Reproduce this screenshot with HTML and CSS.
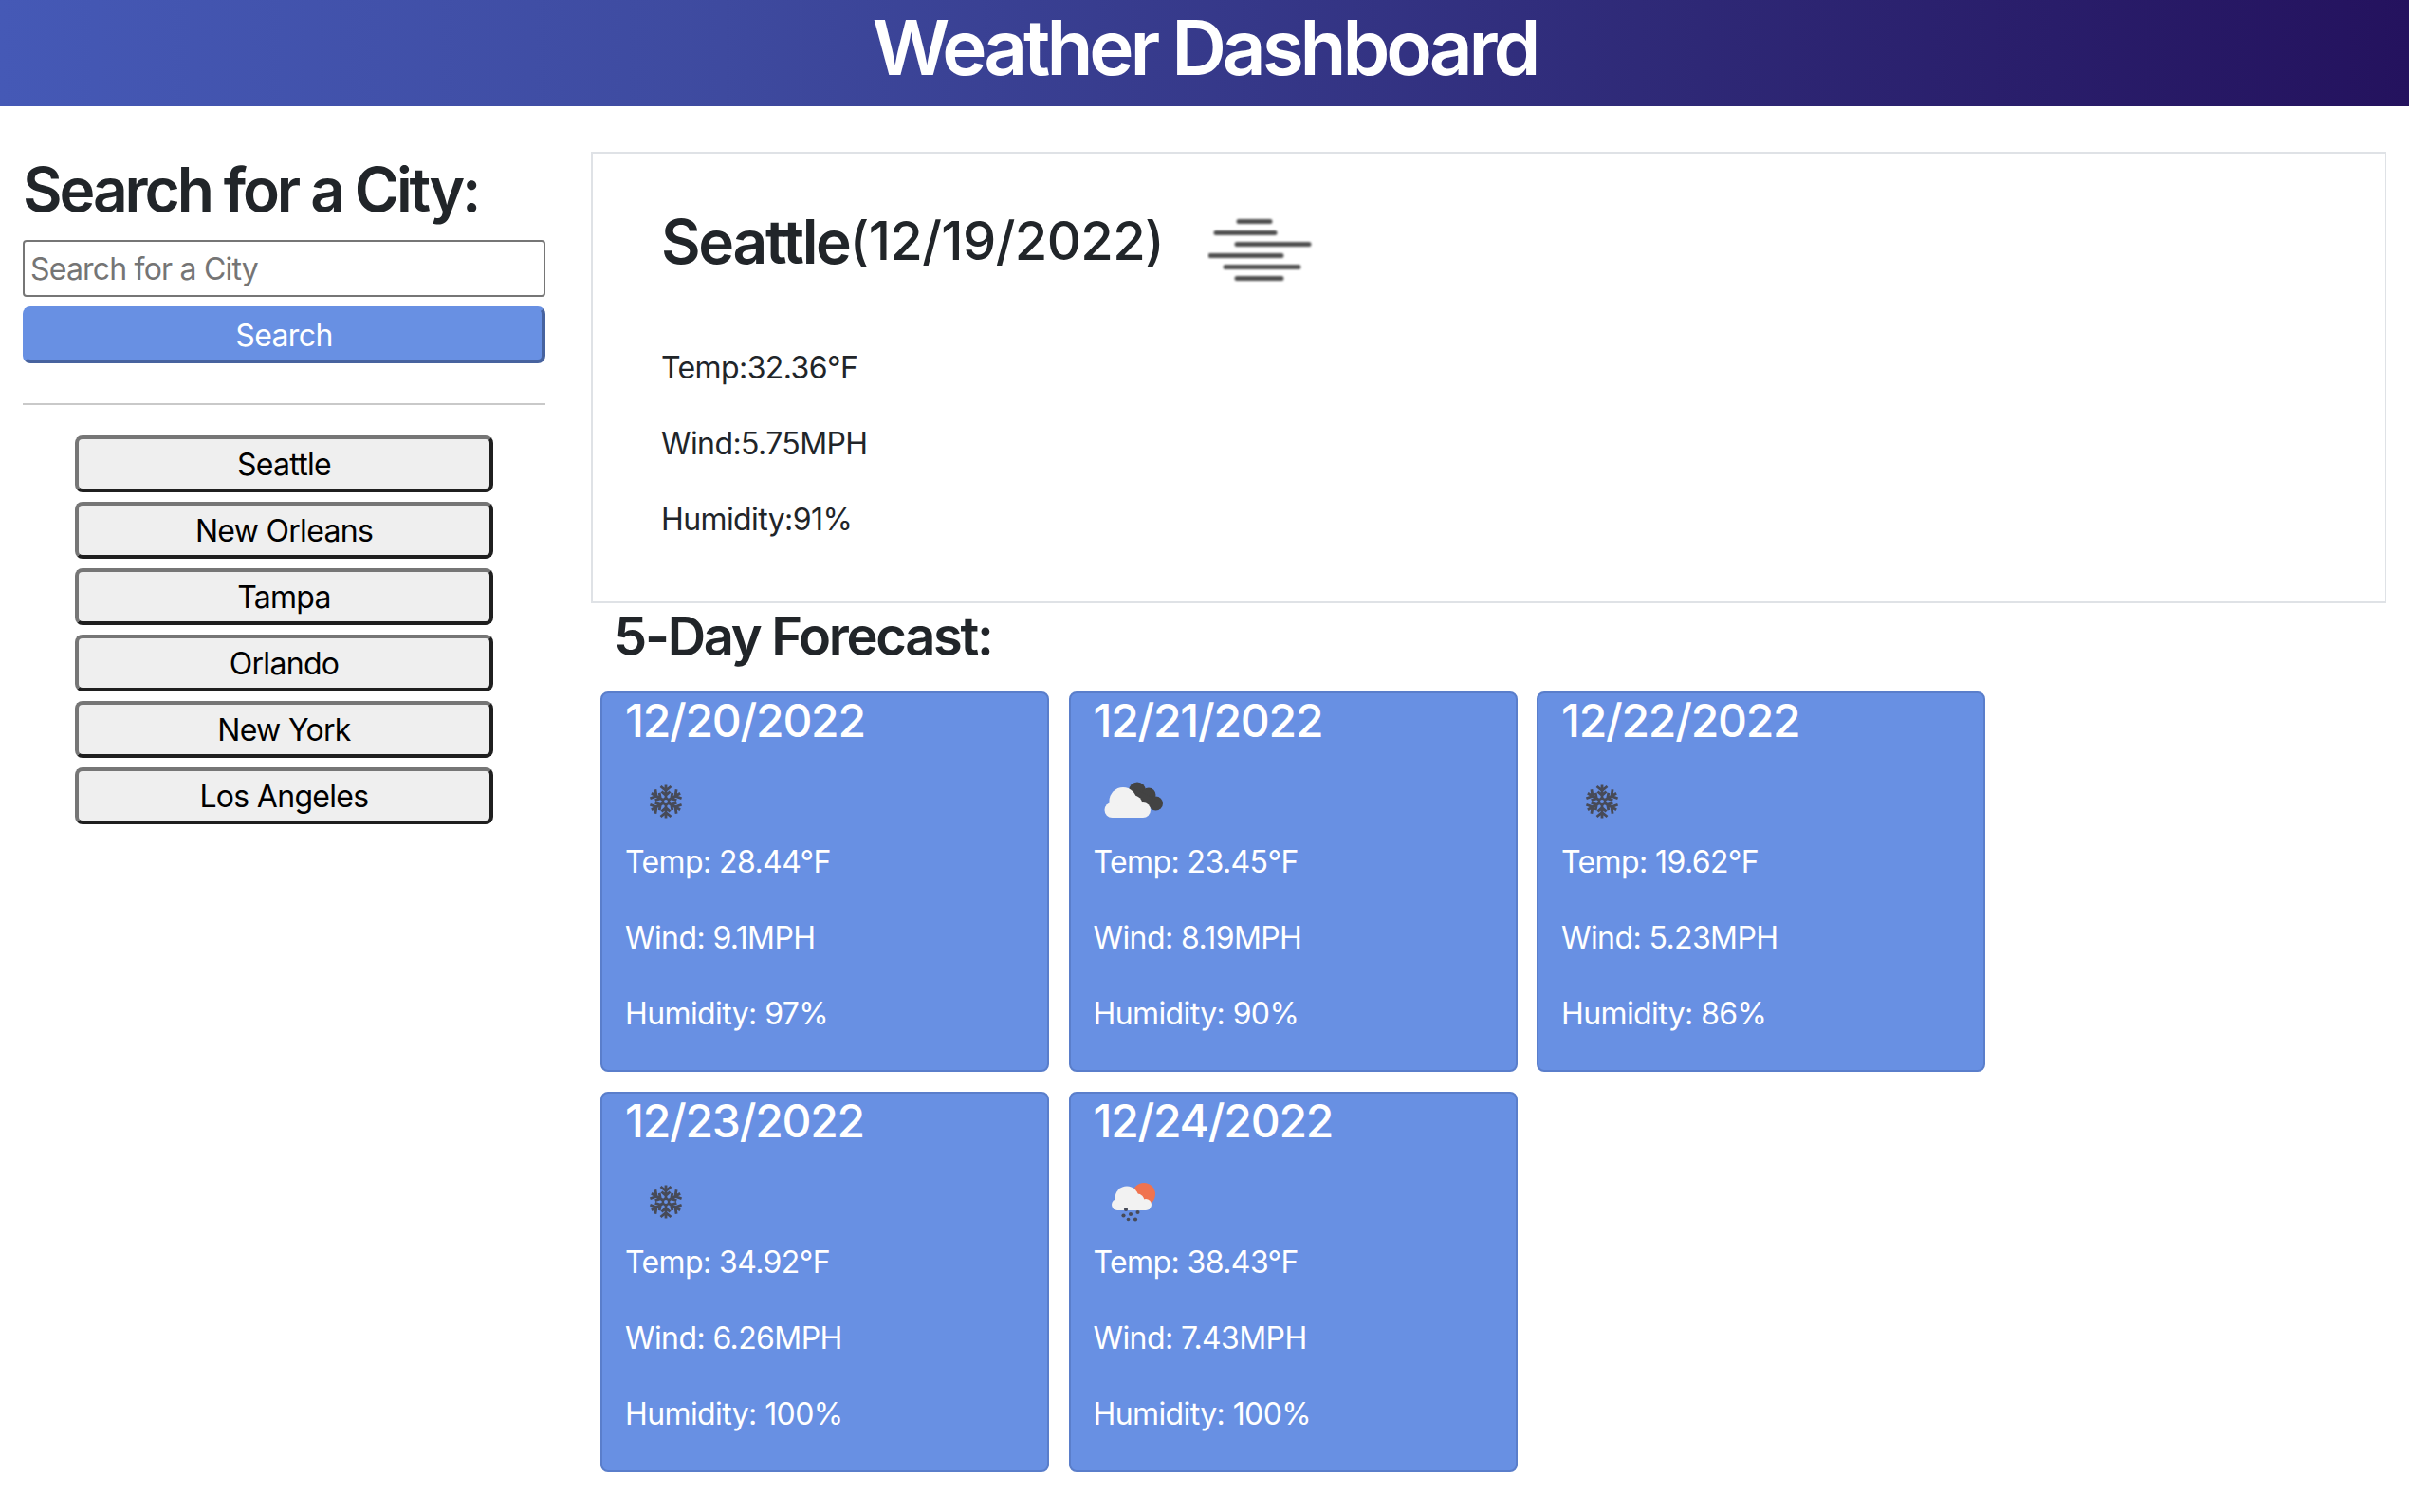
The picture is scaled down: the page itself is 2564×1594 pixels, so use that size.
FILE: index.html
```html
<!DOCTYPE html>
<html lang="en">
<head>
<meta charset="utf-8">
<title>Weather Dashboard</title>
<link rel="stylesheet" href="styles.css">
</head>
<body>
<svg class="defs" width="0" height="0" aria-hidden="true">
  <defs>
    <g id="arm">
      <path d="M0 -3.5V-17.500M-5.500 -16L0 -11.500L5.500 -16M-4.500 -10.500L0 -6.500L4.500 -10.500"/>
    </g>
    <symbol id="flake" viewBox="0 0 86 80">
      <g transform="translate(43 40)" fill="none" stroke="#474a57" stroke-width="2.8">
        <use href="#arm"/>
        <use href="#arm" transform="rotate(60)"/>
        <use href="#arm" transform="rotate(120)"/>
        <use href="#arm" transform="rotate(180)"/>
        <use href="#arm" transform="rotate(240)"/>
        <use href="#arm" transform="rotate(300)"/>
        <circle r="3.2" stroke-width="2.4"/>
      </g>
    </symbol>
  </defs>
</svg>
<header class="banner"><h1 class="banner-title">Weather Dashboard</h1></header>
<div class="layout">
  <aside class="sidebar">
    <h2 class="search-title">Search for a City:</h2>
    <input class="search-input" type="text" placeholder="Search for a City">
    <button class="search-btn" type="button">Search</button>
    <hr class="divider">
    <div class="history">
      <button class="city-btn" type="button">Seattle</button>
      <button class="city-btn" type="button">New Orleans</button>
      <button class="city-btn" type="button">Tampa</button>
      <button class="city-btn" type="button">Orlando</button>
      <button class="city-btn" type="button">New York</button>
      <button class="city-btn" type="button">Los Angeles</button>
    </div>
  </aside>
  <main class="content">
    <section class="today">
      <div class="today-head">
        <h2 class="today-city">Seattle</h2>
        <span class="today-date">(12/19/2022)</span>
        <svg class="today-icon" viewBox="0 0 112 72" fill="none" stroke="#4f4f4f" stroke-width="5" stroke-linecap="round">
          <path d="M32 6.500H65M8 18.500H70M30 30.500H106M2 42.500H77M18 54.500H95M30 66.500H77"/>
        </svg>
      </div>
      <p class="stat">Temp:32.36°F</p>
      <p class="stat">Wind:5.75MPH</p>
      <p class="stat">Humidity:91%</p>
    </section>
    <h3 class="forecast-title">5-Day Forecast:</h3>
    <div class="forecast">
      <article class="day">
        <h4 class="day-date">12/20/2022</h4>
        <svg class="day-icon" viewBox="0 0 86 80"><use href="#flake"/></svg>
        <p class="stat">Temp: 28.44°F</p>
        <p class="stat">Wind: 9.1MPH</p>
        <p class="stat">Humidity: 97%</p>
      </article>
      <article class="day">
        <h4 class="day-date">12/21/2022</h4>
        <svg class="day-icon" viewBox="0 0 86 80">
          <g fill="#434343"><circle cx="46" cy="28.500" r="9"/><circle cx="58" cy="33" r="7.500"/><circle cx="65.500" cy="42" r="7.500"/><path d="M43 26L66 38V46L50 46Z"/></g>
          <g fill="#f2f2f2"><circle cx="31" cy="39.500" r="14.500"/><circle cx="19.500" cy="49" r="8"/><circle cx="52" cy="49" r="8"/><circle cx="42" cy="43" r="9.500"/><rect x="19.500" y="46" width="32.500" height="11"/></g>
        </svg>
        <p class="stat">Temp: 23.45°F</p>
        <p class="stat">Wind: 8.19MPH</p>
        <p class="stat">Humidity: 90%</p>
      </article>
      <article class="day">
        <h4 class="day-date">12/22/2022</h4>
        <svg class="day-icon" viewBox="0 0 86 80"><use href="#flake"/></svg>
        <p class="stat">Temp: 19.62°F</p>
        <p class="stat">Wind: 5.23MPH</p>
        <p class="stat">Humidity: 86%</p>
      </article>
      <article class="day">
        <h4 class="day-date">12/23/2022</h4>
        <svg class="day-icon" viewBox="0 0 86 80"><use href="#flake"/></svg>
        <p class="stat">Temp: 34.92°F</p>
        <p class="stat">Wind: 6.26MPH</p>
        <p class="stat">Humidity: 100%</p>
      </article>
      <article class="day">
        <h4 class="day-date">12/24/2022</h4>
        <svg class="day-icon" viewBox="0 0 86 80">
          <circle cx="53" cy="32" r="12" fill="#f0734f"/>
          <g fill="#f2f2f2"><circle cx="35" cy="36" r="12.500"/><circle cx="25" cy="43" r="6"/><circle cx="55" cy="43" r="6"/><circle cx="46" cy="39" r="7.500"/><rect x="25" y="40" width="30" height="9"/></g>
          <g fill="#474a57"><circle cx="34" cy="48" r="2.100"/><circle cx="31.500" cy="54.500" r="2.100"/><circle cx="39" cy="53" r="2.100"/><circle cx="46.500" cy="51" r="2"/><circle cx="36.500" cy="58.500" r="1.800"/><circle cx="44" cy="58.500" r="2.100"/></g>
        </svg>
        <p class="stat">Temp: 38.43°F</p>
        <p class="stat">Wind: 7.43MPH</p>
        <p class="stat">Humidity: 100%</p>
      </article>
    </div>
  </main>
</div>
</body>
</html>
```

FILE: styles.css
```css
* { box-sizing: border-box; }
html, body { margin: 0; padding: 0; background: #fff; }
body {
  width: 2540px;
  font-family: Inter, "Liberation Sans", sans-serif;
  font-size: 32px;
  line-height: 48px;
  letter-spacing: -0.6px;
  color: #212529;
}
.defs { position: absolute; }
.banner {
  height: 112px;
  padding-bottom: 13px;
  display: flex;
  align-items: center;
  justify-content: center;
  background: linear-gradient(to right, #4559b6 0%, #3e4a9f 30%, #2f2a78 68%, #24125e 100%);
}
.banner-title {
  margin: 0;
  font-size: 80px;
  line-height: 96px;
  font-weight: 600;
  letter-spacing: -4.100px;
  color: #fff;
}
.layout { display: flex; align-items: flex-start; padding-left: 24px; }
.sidebar {
  width: 551px;
  flex: none;
  display: flex;
  flex-direction: column;
  padding-top: 49px;
}
.search-title {
  margin: 0 0 15px;
  font-size: 64px;
  line-height: 77px;
  font-weight: 600;
  letter-spacing: -3.100px;
}
.search-input {
  height: 60px;
  width: 100%;
  padding: 0 6px;
  font: inherit;
  letter-spacing: -0.8px;
  color: #212529;
  background: #fff;
  border: 2px solid #767676;
  border-radius: 4px;
}
.search-input::placeholder { color: #757575; opacity: 1; }
.search-btn {
  height: 60px;
  width: 100%;
  margin-top: 10px;
  padding: 2px 0 0;
  font: inherit;
  letter-spacing: inherit;
  color: #fff;
  background: #6890e3;
  border: 4px solid;
  border-color: #6890e3 #47639f #47639f #6890e3;
  border-radius: 8px;
}
.divider {
  width: 100%;
  margin: 42px 0 32px;
  border: 0;
  border-top: 2px solid #c9c9c9;
}
.history { display: flex; flex-direction: column; align-items: center; gap: 10px; }
.city-btn {
  width: 441px;
  height: 60px;
  padding: 1px 0 0;
  font: inherit;
  letter-spacing: -0.7px;
  color: #000;
  background: #efefef;
  border: 4px solid;
  border-color: #767676 #1f1f1f #1f1f1f #767676;
  border-radius: 8px;
}
.content { width: 1893px; margin-left: 48px; padding-top: 48px; flex: none; }
.today {
  height: 476px;
  padding: 54px 72px 0;
  border: 2px solid #dfe2e6;
}
.today-head { display: flex; align-items: center; height: 77px; margin-bottom: 71px; }
.today-city {
  margin: 0;
  font-size: 64px;
  line-height: 77px;
  font-weight: 600;
  letter-spacing: -2.300px;
}
.today-date {
  font-size: 56px;
  line-height: 77px;
  font-weight: 500;
  letter-spacing: -0.600px;
}
.today-icon { width: 112px; height: 72px; margin: 16px 0 0 47px; filter: blur(0.8px); flex: none; }
.stat { margin: 0 0 32px; }
.forecast-title {
  margin: 0 0 24px;
  padding: 2px 0 0 24px;
  font-size: 56px;
  line-height: 67px;
  font-weight: 600;
  letter-spacing: -2.300px;
}
.forecast { display: flex; flex-wrap: wrap; gap: 21px 20.500px; margin-left: 10px; }
.day {
  width: 473px;
  height: 401px;
  padding: 0 24px;
  color: #fff;
  background: #6890e3;
  border: 2px solid #5a7ecb;
  border-radius: 8px;
}
.day-date {
  margin: 0 0 16px;
  font-size: 48px;
  line-height: 58px;
  font-weight: 500;
  letter-spacing: -1.250px;
}
.day-icon { display: block; width: 86px; height: 80px; filter: blur(0.4px); }
```
